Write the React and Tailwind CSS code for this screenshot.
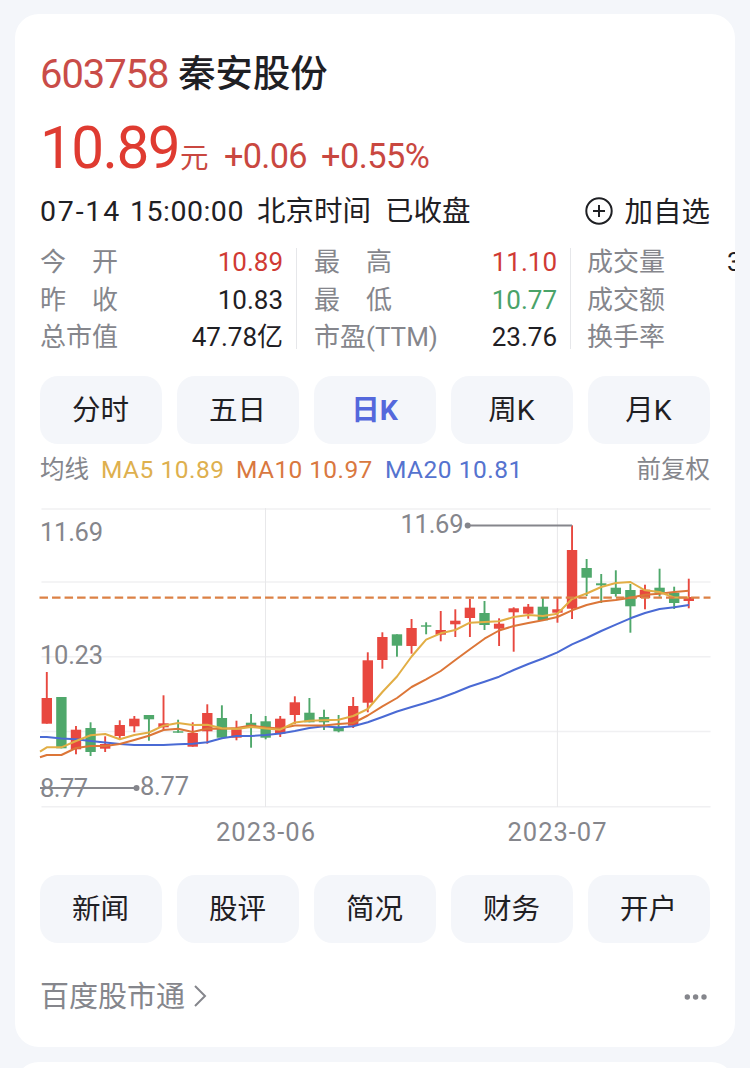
const UP = '#e8483f';
const DOWN = '#4fa86b';

// [direction, high, bodyTop, bodyBottom, low] in chart units
const candles = [
    ['u', 172, 198, 223.7, 223.7], ['d', 197, 197, 248.3, 248.3], ['u', 226, 229.7, 249.3, 254.3],
    ['d', 222.3, 228, 252, 256], ['u', 236.3, 244, 248.7, 252], ['u', 220.3, 225, 236, 238.7],
    ['u', 216, 218.7, 226.3, 232.3], ['d', 215, 215, 219.3, 240.7], ['u', 195.3, 223.3, 227.3, 230],
    ['d', 219.7, 231.3, 232.7, 232.7], ['u', 222.3, 233, 246.7, 246.7], ['u', 204.3, 213, 231.3, 243.7],
    ['d', 205.3, 218, 237.7, 237.7], ['u', 220.7, 229.3, 237.7, 240.3], ['d', 214, 222.7, 226, 247.7],
    ['d', 216, 221.3, 237.7, 239.3], ['u', 216, 218.7, 233.7, 237], ['u', 196.3, 202.3, 215, 224],
    ['d', 198, 212.7, 222.3, 222.3], ['d', 209.7, 217, 222.3, 230], ['d', 215, 226.7, 231.3, 232.3],
    ['u', 197, 206, 225.7, 228], ['u', 152.3, 160.3, 202.7, 212.3], ['u', 132.3, 137, 160, 168.7],
    ['d', 134.3, 134.3, 145.7, 156.7], ['u', 119, 128, 146, 153.7], ['d', 122.3, 125.3, 126.7, 134.3],
    ['u', 111, 130, 134.7, 141.3], ['u', 109.3, 120.7, 124.3, 137], ['u', 99, 107.7, 118, 137],
    ['d', 101, 113, 125, 130], ['u', 118.3, 123.7, 128.7, 146], ['u', 107.3, 108.3, 112.3, 151.7],
    ['u', 104, 106.7, 113.7, 118.7], ['d', 98, 106.7, 120.3, 121], ['u', 97.3, 109.3, 112.7, 122.7],
    ['u', 25.3, 50, 108.7, 119], ['d', 59, 68, 77.7, 96], ['d', 74, 83.3, 85.3, 103],
    ['d', 70.3, 87.7, 94, 96.7], ['d', 84, 90, 106.3, 132.7], ['u', 84.7, 89.7, 98, 109.3],
    ['d', 68.7, 87.7, 92.7, 96.7], ['d', 86.7, 92.7, 103, 109], ['u', 78.7, 97, 101, 108.3],
];

const ma5 = [247.3, 247.3, 241, 235.3, 234, 239.3, 235, 232.5, 225.7, 223, 225, 224.7, 228.3, 229, 227, 228.5, 229.7, 222.5, 220.7, 220.3, 219.7, 216, 209, 192, 176.5, 156.5, 139.7, 133.3, 130, 122.7, 122, 121.3, 117, 115, 116, 113.7, 99, 93.5, 87, 83, 82, 90.3, 92, 97.5, 97.5];
const ma10 = [255, 255, 248, 246, 246, 244, 240, 235.7, 230, 228.7, 232, 228.5, 228.7, 228, 225.5, 227.5, 228.5, 225.5, 225.5, 225.5, 224, 223, 215.5, 206.3, 198, 187, 179.3, 171, 160, 149.3, 138.7, 130.5, 126, 123, 120.3, 117, 110.3, 105, 101.5, 100, 97.7, 94.7, 93.7, 92, 90.7];
const ma20 = [237, 238.5, 239.3, 241, 242.5, 244, 245, 245, 245, 244.3, 243.7, 242.3, 238.3, 236, 236, 235, 233.5, 231, 228, 226.3, 227.5, 226.3, 222.3, 217, 211.5, 207, 202.7, 198, 192.5, 186.5, 181.7, 176.7, 170, 164, 158.5, 152.3, 144.3, 138, 131, 124.7, 118.3, 113, 109, 107.3, 105];

const xAt = (i) => 6.8 + i * 14.59;
const line = (start, values) => `0,${start} ` + values.map((v, i) => `${xAt(i).toFixed(1)},${v}`).join(' ');

const stats = [
    [
        { label: '今开', value: '10.89', color: 'text-[#d03a34]' },
        { label: '昨收', value: '10.83', color: 'text-[#1f2024]' },
        { label: '总市值', value: '47.78亿', color: 'text-[#1f2024]' },
    ],
    [
        { label: '最高', value: '11.10', color: 'text-[#d03a34]' },
        { label: '最低', value: '10.77', color: 'text-[#4aa369]' },
        { label: '市盈(TTM)', value: '23.76', color: 'text-[#1f2024]' },
    ],
];

function StatLabel({ text }) {
    if (text.length === 2) {
        return (
            <span className="flex w-[78px] justify-between text-[#85868c]">
                <span>{text[0]}</span>
                <span>{text[1]}</span>
            </span>
        );
    }
    return <span className="text-[#85868c]">{text}</span>;
}

function ButtonRow({ items, active }) {
    return (
        <div className="grid grid-cols-5 gap-[15px]">
            {items.map((item) => (
                <button
                    key={item}
                    className={
                        'flex h-[68px] items-center justify-center rounded-[18px] bg-[#f4f6fa] pt-[2px] pr-px text-[28.5px] leading-none ' +
                        (item === active ? 'font-bold text-[#5468dc]' : 'text-[#1f2024]')
                    }
                >
                    {item}
                </button>
            ))}
        </div>
    );
}

function Chart() {
    return (
        <svg width="670" height="350" viewBox="0 0 670 350" className="block overflow-visible">
            <g stroke="#f0f0f2" strokeWidth="1.4">
                {[9, 82, 156.7, 231.5, 306.7].map((y) => (
                    <line key={y} x1="1.5" x2="670.5" y1={y} y2={y} />
                ))}
                <line x1="225.5" x2="225.5" y1="8" y2="307" strokeWidth="1" stroke="#e8e8ea" />
                <line x1="517.4" x2="517.4" y1="8" y2="307" strokeWidth="1" stroke="#e8e8ea" />
            </g>

            {candles.map(([dir, high, top, bottom, low], i) => {
                const color = dir === 'u' ? UP : DOWN;
                return (
                    <g key={i} fill={color}>
                        <rect x={xAt(i) - 0.95} y={high} width="1.9" height={low - high} />
                        <rect x={xAt(i) - 5.2} y={top} width="10.4" height={bottom - top} />
                    </g>
                );
            })}

            <g fill="none" strokeWidth="2" strokeLinejoin="round">
                <polyline points={line(237, ma20)} stroke="#4a6ad4" />
                <polyline points={line(257.3, ma10)} stroke="#dc7638" />
                <polyline points={line(251.7, ma5)} stroke="#e2ae45" />
            </g>
            <line x1="-0.5" x2="670.5" y1="97.6" y2="97.6" stroke="#dc8145" strokeWidth="2.3" strokeDasharray="8.5 4.03" />

            <g stroke="#85868c" strokeWidth="1.8" fill="#85868c">
                <line x1="427" x2="532" y1="25.5" y2="25.5" />
                <line x1="0" x2="96" y1="288" y2="288" />
                <circle cx="427.7" cy="25.5" r="3" stroke="none" />
                <circle cx="96.5" cy="288" r="3" stroke="none" />
            </g>

            <g fill="#85868c" fontSize="25.5">
                <text x="0" y="41" textLength="63">11.69</text>
                <text x="0" y="164" textLength="63">10.23</text>
                <text x="0" y="297" textLength="48">8.77</text>
                <text x="100" y="295" textLength="49">8.77</text>
                <text x="360.5" y="33" textLength="63">11.69</text>
                <text x="176" y="341" textLength="99">2023-06</text>
                <text x="467.5" y="341" textLength="99">2023-07</text>
            </g>
        </svg>
    );
}

export default function App() {
    return (
        <div className="flex h-[1068px] w-[750px] flex-col gap-[15px] overflow-hidden bg-[#f4f6fa] px-[15px] pt-[14px] font-['Roboto','Noto_Sans_CJK_SC',sans-serif] text-[#1f2024]">
            <section className="h-[1033px] shrink-0 overflow-hidden rounded-[24px] bg-white px-[25px] pt-[30px]">
                <h1 className="flex h-[58px] items-center gap-[10px] pt-[3px] text-[37.3px] font-medium leading-none">
                    <span className="text-[40px] font-normal tracking-[-1.1px] text-[#c94c48]">603758</span>
                    秦安股份
                </h1>

                <div className="flex h-[79px] items-baseline leading-[93px] text-[#c94740]">
                    <span className="w-[140px] text-[58.5px] tracking-[-1.6px] text-[#df3b31]">10.89</span>
                    <span className="w-[44px] text-[28.5px]">元</span>
                    <span className="w-[97px] text-[34.3px] tracking-[-0.7px]">+0.06</span>
                    <span className="text-[34.3px] tracking-[-0.5px]">+0.55%</span>
                </div>

                <div className="flex h-[60px] items-center pt-[3px] text-[28.5px] leading-none">
                    <span className="w-[90px] tracking-[1.8px]">07-14</span>
                    <span className="w-[127px] tracking-[0.5px]">15:00:00</span>
                    <span className="w-[128px]">北京时间</span>
                    <span>已收盘</span>
                    <span className="ml-auto flex items-center gap-[11px]">
                        <svg width="28" height="28" viewBox="0 0 28 28" fill="none" stroke="#1f2024" strokeWidth="2" className="-mt-[3px]">
                            <circle cx="14" cy="14" r="12.7" />
                            <path d="M14 8v12M8 14h12" />
                        </svg>
                        <span className="pt-px">加自选</span>
                    </span>
                </div>

                {/* the third column runs past the right edge of the card */}
                <div className="-mr-[25px] flex h-[135px] pt-[3px] text-[26px] leading-[37.5px]">
                    {stats.map((column, i) => (
                        <div key={i} className={i === 0 ? 'flex w-[257px]' : 'flex w-[274px]'}>
                            <div className={i === 0 ? 'w-[243px]' : 'w-[260px] pl-[17px]'}>
                                {column.map((s) => (
                                    <div key={s.label} className="flex h-[37.5px] items-center justify-between">
                                        <StatLabel text={s.label} />
                                        <span className={s.color}>{s.value}</span>
                                    </div>
                                ))}
                            </div>
                            <div className="mt-[4px] ml-auto h-[101px] w-px bg-[#e6e7ea]" />
                        </div>
                    ))}
                    <div className="w-[164px] overflow-hidden pl-4 text-[#85868c]">
                        <div className="flex w-[260px]">
                            <span className="w-[140px]">成交量</span>
                            <span className="text-[#1f2024]">3</span>
                        </div>
                        <div>成交额</div>
                        <div>换手率</div>
                    </div>
                </div>

                <ButtonRow items={['分时', '五日', '日K', '周K', '月K']} active="日K" />

                <div className="flex h-[56px] items-center pb-[4px] text-[24.5px] leading-none text-[#85868c]">
                    <span className="w-[61px]">均线</span>
                    <span className="w-[135px] tracking-[0.5px] text-[#deb04e]">MA5 10.89</span>
                    <span className="w-[149px] tracking-[0.4px] text-[#d97840]">MA10 10.97</span>
                    <span className="tracking-[0.5px] text-[#5573cf]">MA20 10.81</span>
                    <span className="ml-auto">前复权</span>
                </div>

                <Chart />

                <div className="mt-[25px]">
                    <ButtonRow items={['新闻', '股评', '简况', '财务', '开户']} />
                </div>

                <div className="mt-[24px] flex h-[58px] items-center text-[29px] leading-none text-[#85868c]">
                    <span className="pt-[3px]">百度股市通</span>
                    <svg width="13" height="22" viewBox="0 0 13 22" fill="none" stroke="#85868c" strokeWidth="2" className="ml-[9px]">
                        <path d="M1 1l10 10L1 21" />
                    </svg>
                    <svg width="24" height="6" viewBox="0 0 24 6" fill="#85868c" className="mt-px mr-[2px] ml-auto">
                        <circle cx="3.3" cy="3" r="2.7" />
                        <circle cx="11.6" cy="3" r="2.7" />
                        <circle cx="20" cy="3" r="2.7" />
                    </svg>
                </div>
            </section>
            <section className="h-[100px] shrink-0 rounded-[24px] bg-white" />
        </div>
    );
}
